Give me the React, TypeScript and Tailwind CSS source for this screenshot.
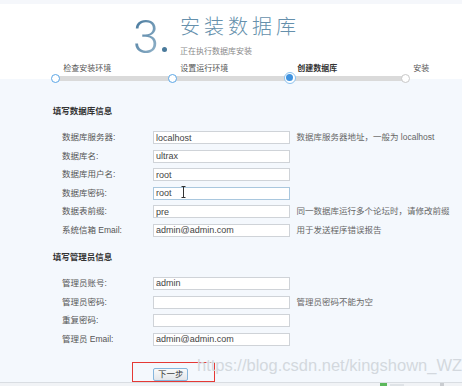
import React from 'react';

type Field = {
  label: string;
  value?: string;
  hint?: string;
  focused?: boolean;
};

const dbFields: Field[] = [
  { label: '数据库服务器:', value: 'localhost', hint: '数据库服务器地址，一般为 localhost' },
  { label: '数据库名:', value: 'ultrax' },
  { label: '数据库用户名:', value: 'root' },
  { label: '数据库密码:', value: 'root', focused: true },
  { label: '数据表前缀:', value: 'pre', hint: '同一数据库运行多个论坛时，请修改前缀' },
  { label: '系统信箱 Email:', value: 'admin@admin.com', hint: '用于发送程序错误报告' },
];

const adminFields: Field[] = [
  { label: '管理员账号:', value: 'admin' },
  { label: '管理员密码:', hint: '管理员密码不能为空' },
  { label: '重复密码:' },
  { label: '管理员 Email:', value: 'admin@admin.com' },
];

const steps = [
  { label: '检查安装环境', state: 'done', width: 'w-[117px]' },
  { label: '设置运行环境', state: 'done', width: 'w-[117px]' },
  { label: '创建数据库', state: 'active', width: 'w-[116px]' },
  { label: '安装', state: 'todo', width: 'w-[40px]' },
];

function FieldRow({ field }: { field: Field }) {
  return (
    <div className="relative flex items-center h-[13px] pl-[62px]">
      <div className="w-[91px] text-[8.5px] leading-[13px] text-[#555]">{field.label}</div>
      <input
        readOnly
        value={field.value ?? ''}
        className={`w-[137px] h-[13px] bg-white border px-[2px] text-[9px] leading-[11px] text-[#444] outline-none ${
          field.focused ? 'border-[#a9c7de]' : 'border-[#cfd3d8]'
        }`}
      />
      {field.hint && (
        <div className="ml-[6.5px] text-[8.5px] leading-[13px] text-[#666] whitespace-nowrap">{field.hint}</div>
      )}
      {field.focused && (
        <svg
          className="absolute left-[181px] top-[-1px]"
          width="5"
          height="12"
          viewBox="0 0 5 12"
        >
          <path d="M0.5 0.5 H4.5 M2.5 0.5 V11.5 M0.5 11.5 H4.5" stroke="#333" strokeWidth="1" fill="none" />
        </svg>
      )}
    </div>
  );
}

function StepDot({ state }: { state: string }) {
  if (state === 'active') {
    return (
      <div className="relative -ml-[1px] -mt-[2px] w-[12px] h-[12px] rounded-full bg-white border-[1.5px] border-[#8cc2ee] flex items-center justify-center">
        <div className="w-[7px] h-[7px] rounded-full bg-[#3f93e0]" />
      </div>
    );
  }
  return (
    <div
      className={`relative w-[9px] h-[9px] rounded-full bg-white border-[1.5px] ${
        state === 'done' ? 'border-[#5ba6e6]' : 'border-[#c8c8c8]'
      }`}
    />
  );
}

export default function App() {
  return (
    <div
      className="relative w-[462px] h-[386px] overflow-hidden bg-[#f4f8fd]"
      style={{ fontFamily: '"Liberation Sans", "Noto Sans CJK SC", sans-serif' }}
    >
      {/* top band */}
      <div className="h-[4px] bg-[#f5f7fb]" />

      {/* header */}
      <div className="h-[58px] bg-white flex pl-[133px] pt-[9px]">
        <div className="w-[47px] flex items-start">
          <span
            className="text-[47px] leading-none bg-linear-to-br from-[#3d7197] to-[#9dbcd0] bg-clip-text text-transparent"
            style={{ fontFamily: 'Roboto, sans-serif', fontWeight: 300 }}
          >
            3
          </span>
          <div className="mt-[34px] ml-[3px] w-[4.5px] h-[4.5px] rounded-full bg-[#4a7a9b]" />
        </div>
        <div className="flex flex-col pt-[4px]">
          <div className="text-[20px] leading-[20px] tracking-[4px] font-light text-[#6590ac] whitespace-nowrap">
            安装数据库
          </div>
          <div className="mt-[10px] text-[8px] leading-[10px] text-[#8a8a8a] whitespace-nowrap">正在执行数据库安装</div>
        </div>
      </div>

      {/* progress */}
      <div className="relative h-[22px] bg-[linear-gradient(to_bottom,#ffffff_17px,#f4f8fd_17px)]">
        <div className="absolute left-[55px] top-[14px] w-[350px] h-[4.5px] bg-[#dadada]" />
        <div className="flex pl-[50.7px] pt-[2px]">
          {steps.map((s) => (
            <div key={s.label} className={`${s.width} flex flex-col`}>
              <div
                className={`pl-[12.5px] h-[10px] text-[8px] leading-[10px] whitespace-nowrap ${
                  s.state === 'active' ? 'text-[#333] font-bold' : 'text-[#555]'
                }`}
              >
                {s.label}
              </div>
              <div className="mt-[-0.5px]">
                <StepDot state={s.state} />
              </div>
            </div>
          ))}
        </div>
      </div>

      {/* database info */}
      <div className="mt-[21px] pl-[52.7px] h-[12px] text-[8.5px] leading-[12px] font-bold text-[#333]">填写数据库信息</div>
      <div className="mt-[14px] flex flex-col gap-[5.6px]">
        {dbFields.map((f) => (
          <FieldRow key={f.label} field={f} />
        ))}
      </div>

      {/* admin info */}
      <div className="mt-[14px] pl-[52.7px] h-[12px] text-[8.5px] leading-[12px] font-bold text-[#333]">填写管理员信息</div>
      <div className="mt-[14px] flex flex-col gap-[5.6px]">
        {adminFields.map((f) => (
          <FieldRow key={f.label} field={f} />
        ))}
      </div>

      {/* submit */}
      <div className="mt-[16px] ml-[132.3px] w-[83px] h-[20px] border border-[#e53935] flex items-start pl-[20px] pt-[5.5px]">
        <button className="w-[35px] h-[13px] rounded-[2px] border border-[#86b6dd] bg-linear-to-b from-[#fafafa] to-[#e3e6ea] text-[8.5px] leading-[11px] text-[#333]">
          下一步
        </button>
      </div>

      {/* bottom strip */}
      <div className="absolute left-0 right-0 top-[382px] h-[4px] border-t border-[#d9dde2] bg-[#f1f3f6] flex items-center">
        <div className="ml-[380px] w-[7px] h-[3px] bg-[#5cb85c]" />
        <div className="ml-[3px] w-[14px] h-[2px] bg-[#dfe3e7]" />
        <div className="ml-[36px] w-[4px] h-[3px] bg-[#c9ccd0]" />
      </div>

      {/* watermark */}
      <div
        className="absolute left-[197px] top-[357px] text-[16.5px] leading-none text-[#d3d8de] whitespace-nowrap pointer-events-none"
        style={{ fontFamily: '"Liberation Sans", sans-serif' }}
      >
        https://blog.csdn.net/kingshown_WZ
      </div>
    </div>
  );
}
